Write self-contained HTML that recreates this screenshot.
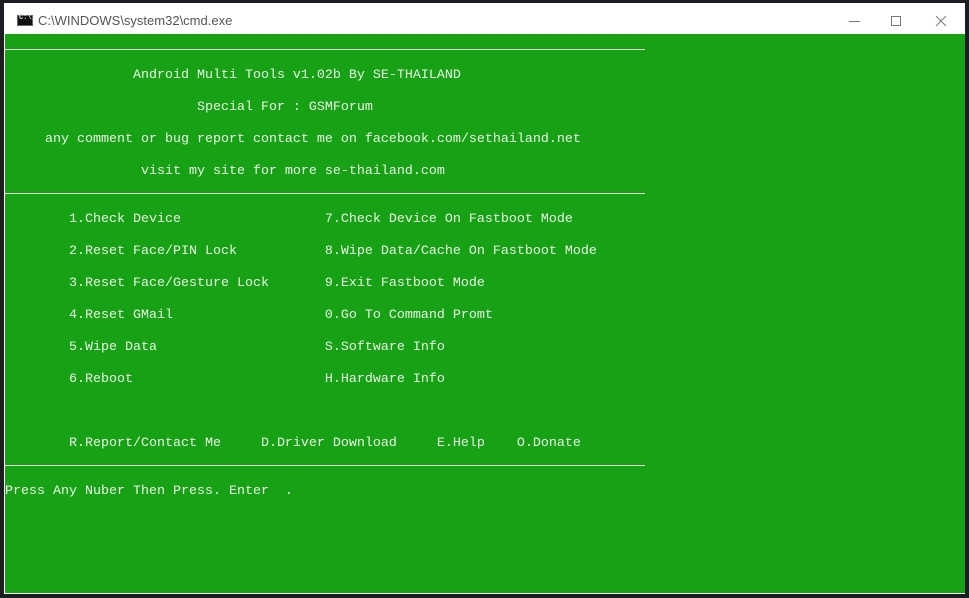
<!DOCTYPE html>
<html><head><meta charset="utf-8"><style>
html,body{margin:0;padding:0;width:969px;height:598px;overflow:hidden;background:#1b1d22;}
.win{position:absolute;left:4px;top:3px;width:961px;height:591px;background:#fff;}
.title{position:absolute;left:34px;top:10px;font:13px "Liberation Sans",sans-serif;color:#555;}
.ico{position:absolute;left:13px;top:12px;width:16px;height:11px;background:#111;border:1px solid #666;box-sizing:border-box;}
.ico:after{content:"C:\\_";position:absolute;left:1px;top:-2px;font:bold 7px "Liberation Mono",monospace;color:#ddd;}
.con{position:absolute;left:5px;top:34px;width:960px;height:559px;background:#16a214;}
pre{position:absolute;left:0;top:2px;margin:0;font:13.33px/16px "Liberation Mono","DejaVu Sans Mono",monospace;color:#eaf2e6;}
.hl{position:absolute;left:0;width:640px;height:1px;background:#eaf2e6;}
</style></head><body>
<div class="win">
<div class="ico"></div>
<div class="title">C:\WINDOWS\system32\cmd.exe</div>
<svg style="position:absolute;left:840px;top:10px" width="110" height="16">
<line x1="5" y1="8.5" x2="16" y2="8.5" stroke="#777" stroke-width="1"/>
<rect x="47.5" y="3.5" width="9" height="9" fill="none" stroke="#777"/>
<line x1="92" y1="3" x2="102" y2="13" stroke="#777"/><line x1="102" y1="3" x2="92" y2="13" stroke="#777"/>
</svg>
</div>
<div class="con">
<div class="hl" style="top:15px"></div>
<div class="hl" style="top:159px"></div>
<div class="hl" style="top:431px"></div>
<pre>


                Android Multi Tools v1.02b By SE-THAILAND

                        Special For : GSMForum

     any comment or bug report contact me on facebook.com/sethailand.net

                 visit my site for more se-thailand.com


        1.Check Device                  7.Check Device On Fastboot Mode

        2.Reset Face/PIN Lock           8.Wipe Data/Cache On Fastboot Mode

        3.Reset Face/Gesture Lock       9.Exit Fastboot Mode

        4.Reset GMail                   0.Go To Command Promt

        5.Wipe Data                     S.Software Info

        6.Reboot                        H.Hardware Info



        R.Report/Contact Me     D.Driver Download     E.Help    O.Donate


Press Any Nuber Then Press. Enter  .
</pre>
</div>
</body></html>
